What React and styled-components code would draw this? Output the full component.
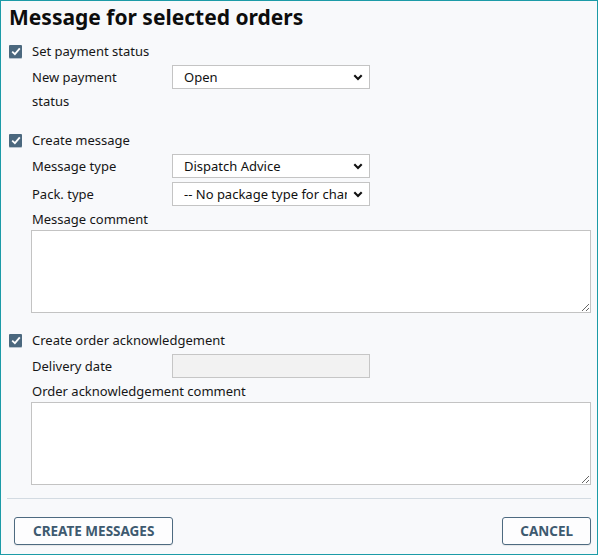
import React from 'react';
import styled, { createGlobalStyle } from 'styled-components';

const GlobalStyle = createGlobalStyle`
  body {
    margin: 0;
    font-family: "Noto Sans", "Open Sans", sans-serif;
    color: #161616;
  }
`;

const Dialog = styled.div`
  width: 598px;
  height: 555px;
  box-sizing: border-box;
  border: 1px solid #1c9ba7;
  background: #f8f9fb;
  padding: 0 6px;
  display: flex;
  flex-direction: column;
`;

const Title = styled.h1`
  margin: 0 0 6px;
  padding-left: 2px;
  font-size: 21px;
  font-weight: 700;
  line-height: 32px;
  color: #0d0d0d;
`;

const Section = styled.section`
  padding-left: 2px;
  & + & {
    margin-top: 15px;
  }
`;

const CheckRow = styled.label`
  display: flex;
  align-items: center;
  gap: 10px;
  height: 24px;
  font-size: 13px;
`;

const Box = styled.span`
  width: 13px;
  height: 13px;
  border-radius: 1px;
  background: #4b687e;
  box-shadow: 0 1px 0 #b9c5cf;
  display: flex;
  align-items: center;
  justify-content: center;
`;

const Fields = styled.div`
  margin: 2px 0 0 22px;
  display: grid;
  grid-template-columns: 141px 198px 1fr;
  row-gap: 4px;
`;

const Label = styled.div`
  grid-column: ${p => (p.$wide ? '1 / -1' : '1')};
  width: ${p => (p.$wide ? 'auto' : '100px')};
  padding-left: 1px;
  font-size: 13px;
  line-height: ${p => (p.$wide ? '22px' : '24px')};
  margin-top: ${p => (p.$wide ? '-2px' : '0')};
`;

const Control = styled.div`
  grid-column: 2;
  position: relative;
  height: 24px;
`;

const Select = styled.select`
  appearance: none;
  width: 100%;
  height: 24px;
  box-sizing: border-box;
  border: 1px solid #c4c4c4;
  border-radius: 0;
  background: #fff;
  padding: 0 22px 0 11px;
  font: 13px "Noto Sans", sans-serif;
  color: #111;
  outline: none;
`;

const Chevron = styled.svg`
  position: absolute;
  right: 7px;
  top: 9px;
  pointer-events: none;
`;

const Input = styled.input`
  width: 100%;
  height: 24px;
  box-sizing: border-box;
  border: 1px solid #c6c6c6;
  background: #f2f2f2;
  font: 13px "Noto Sans", sans-serif;
`;

const TextArea = styled.textarea`
  grid-column: 1 / -1;
  display: block;
  width: 100%;
  height: 83px;
  box-sizing: border-box;
  border: 1px solid #c3c3c3;
  background: #fff;
  resize: vertical;
  font: 13px "Noto Sans", sans-serif;
  margin-top: -4px;
  outline: none;
`;

const Footer = styled.footer`
  margin-top: auto;
  border-top: 1px solid #d3dbe2;
  padding: 18px 0 9px 7px;
  display: flex;
  justify-content: space-between;
`;

const Button = styled.button`
  height: 28px;
  padding: 0 ${p => p.$pad}px;
  border: 1px solid #4d6a80;
  border-radius: 3px;
  background: #fdfdfe;
  color: #3e5a70;
  font: 700 13.5px "Noto Sans", sans-serif;
  text-transform: uppercase;
  box-shadow: 0 1px 1px rgba(0, 0, 0, 0.08);
`;

const Check = () => (
  <Box>
    <svg width="10" height="9" viewBox="0 0 10 9">
      <path d="M1.2 4.6 L3.9 7.2 L8.8 1.4" fill="none" stroke="#fff" strokeWidth="1.8" />
    </svg>
  </Box>
);

const Dropdown = ({ value }) => (
  <Control>
    <Select defaultValue={value}>
      <option>{value}</option>
    </Select>
    <Chevron width="10" height="7" viewBox="0 0 10 7">
      <path d="M1.3 1.3 L5 5 L8.7 1.3" fill="none" stroke="#111" strokeWidth="2.1" />
    </Chevron>
  </Control>
);

export default function App() {
  return (
    <>
      <GlobalStyle />
      <Dialog>
        <Title>Message for selected orders</Title>

        <Section>
          <CheckRow><Check />Set payment status</CheckRow>
          <Fields>
            <Label>New payment status</Label>
            <Dropdown value="Open" />
          </Fields>
        </Section>

        <Section>
          <CheckRow><Check />Create message</CheckRow>
          <Fields>
            <Label>Message type</Label>
            <Dropdown value="Dispatch Advice" />
            <Label>Pack. type</Label>
            <Dropdown value="-- No package type for change --" />
            <Label $wide>Message comment</Label>
            <TextArea />
          </Fields>
        </Section>

        <Section>
          <CheckRow><Check />Create order acknowledgement</CheckRow>
          <Fields>
            <Label>Delivery date</Label>
            <Control>
              <Input disabled />
            </Control>
            <Label $wide>Order acknowledgement comment</Label>
            <TextArea />
          </Fields>
        </Section>

        <Footer>
          <Button $pad={18}>Create messages</Button>
          <Button $pad={17}>Cancel</Button>
        </Footer>
      </Dialog>
    </>
  );
}
